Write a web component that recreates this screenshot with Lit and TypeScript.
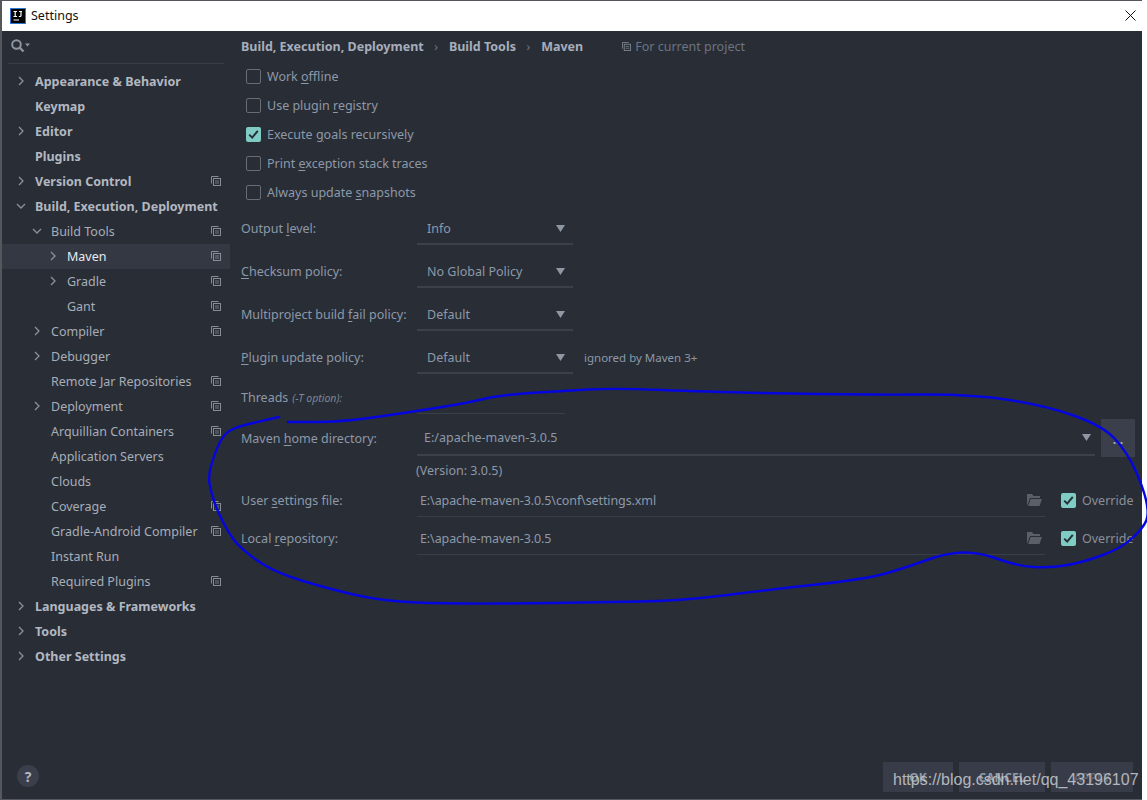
import { LitElement, html, css, svg } from "lit";
import { customElement } from "lit/decorators.js";

type Row = { t: string; d: number; b?: boolean; c?: "r" | "d"; copy?: boolean; sel?: boolean };

const ROWS: Row[] = [
  { t: "Appearance & Behavior", d: 0, b: true, c: "r" },
  { t: "Keymap", d: 0, b: true },
  { t: "Editor", d: 0, b: true, c: "r" },
  { t: "Plugins", d: 0, b: true },
  { t: "Version Control", d: 0, b: true, c: "r", copy: true },
  { t: "Build, Execution, Deployment", d: 0, b: true, c: "d" },
  { t: "Build Tools", d: 1, c: "d", copy: true },
  { t: "Maven", d: 2, c: "r", copy: true, sel: true },
  { t: "Gradle", d: 2, c: "r", copy: true },
  { t: "Gant", d: 2, copy: true },
  { t: "Compiler", d: 1, c: "r", copy: true },
  { t: "Debugger", d: 1, c: "r" },
  { t: "Remote Jar Repositories", d: 1, copy: true },
  { t: "Deployment", d: 1, c: "r", copy: true },
  { t: "Arquillian Containers", d: 1, copy: true },
  { t: "Application Servers", d: 1 },
  { t: "Clouds", d: 1 },
  { t: "Coverage", d: 1, copy: true },
  { t: "Gradle-Android Compiler", d: 1, copy: true },
  { t: "Instant Run", d: 1 },
  { t: "Required Plugins", d: 1, copy: true },
  { t: "Languages & Frameworks", d: 0, b: true, c: "r" },
  { t: "Tools", d: 0, b: true, c: "r" },
  { t: "Other Settings", d: 0, b: true, c: "r" },
];

const CURVE_A: number[][] = [[279,417],[262,421],[240,426],[226,432],[217,447],[208,475],[211,492],[217,510],[228,532],[240,548],[273,572],[333,590],[383,601],[450,604],[560,603],[597,602],[680,601],[766,590],[867,579],[908,567],[946,553],[979,552],[1017,566],[1051,568],[1084,562],[1122,548],[1144,527],[1149,513],[1143,487],[1127,452],[1103,426],[1047,406],[972,394],[867,395],[710,392],[616,388],[560,391],[500,395],[467,403],[417,411],[343,422],[288,422]];

function smooth(p: number[][]): string {
  let d = `M${p[0][0]} ${p[0][1]}`;
  for (let i = 1; i < p.length - 1; i++) {
    const mx = (p[i][0] + p[i + 1][0]) / 2;
    const my = (p[i][1] + p[i + 1][1]) / 2;
    d += ` Q${p[i][0]} ${p[i][1]} ${mx} ${my}`;
  }
  const l = p[p.length - 1];
  return d + ` L${l[0]} ${l[1]}`;
}

const copyIcon = (cls = "copy") => html`<svg class=${cls} viewBox="0 0 10 10" width="10" height="10" fill="none" stroke="currentColor" stroke-width="1">
  <path d="M7.5 .5H.5V7.5"/><rect x="2.5" y="2.5" width="7" height="7"/><path d="M4 5H8M4 7H8" stroke-width=".8"/></svg>`;

const chevron = (c?: "r" | "d") =>
  c === "r"
    ? html`<svg class="chev" viewBox="0 0 10 10" width="10" height="10" fill="none" stroke="currentColor" stroke-width="1.3"><path d="M3 1L7 5L3 9"/></svg>`
    : c === "d"
    ? html`<svg class="chev" viewBox="0 0 10 10" width="10" height="10" fill="none" stroke="currentColor" stroke-width="1.3"><path d="M1 3L5 7L9 3"/></svg>`
    : html`<span class="chev"></span>`;

const tick = html`<svg viewBox="0 0 15 15" width="15" height="15" fill="none" stroke="#263038" stroke-width="2"><path d="M3.2 7.6L6.2 10.6L11.8 3.8"/></svg>`;
const arrow = html`<svg class="arrow" viewBox="0 0 9 7" width="9" height="7"><path d="M0 0H9L4.5 7Z" fill="#8f97a4"/></svg>`;
const folder = html`<svg class="folder" viewBox="0 0 16 12" width="16" height="12"><path d="M1 0H6L7.5 2H14V4H4L1.5 11H1Z" fill="#5b6068"/><path d="M4.6 5H16L13.5 12H2.2Z" fill="#5b6068"/></svg>`;

@customElement("app-root")
export class AppRoot extends LitElement {
  static styles = css`
    :host { display: block; width: 1147px; height: 800px; background: #fff; position: relative; overflow: hidden;
      font-family: "Noto Sans", sans-serif; font-size: 12.5px; }
    .window { width: 1142px; height: 800px; box-sizing: border-box; border-left: 2px solid #55575c; border-top: 1px solid #55575c; border-bottom: 1px solid #55575c; display: flex; flex-direction: column; }
    .title { height: 30px; flex: none; background: #fff; display: flex; align-items: center; color: #111; font-size: 12.5px; padding-bottom: 1px; box-sizing: border-box; }
    .logo { width: 16px; height: 16px; margin-left: 8px; margin-right: 5px; background: #000; box-sizing: border-box; border: 1px solid #2b78d6; color: #fff; display: flex; flex-direction: column; align-items: center; }
    .logo svg { display: block; }
    .close { margin-left: auto; margin-right: 6px; }
    .body { flex: 1; display: flex; background: #292d36; min-height: 0; }
    .side { width: 228px; flex: none; display: flex; flex-direction: column; }
    .search { height: 33px; flex: none; margin: 0 6px; border-bottom: 1px solid #3a3e48; display: flex; align-items: center; padding-left: 3px; box-sizing: border-box; margin-bottom: 5px; color: #8f959f; padding-bottom: 3px; }
    .row { height: 25px; flex: none; display: flex; align-items: center; color: #a7aeb8; position: relative; padding-bottom: 1px; box-sizing: border-box; }
    .row.b { font-weight: 700; color: #b2b8c1; }
    .row.sel { background: #343842; color: #e4ebf3; }
    .d0 { padding-left: 14px; } .d1 { padding-left: 30px; } .d2 { padding-left: 46px; }
    .chev { width: 10px; height: 10px; margin-right: 9px; flex: none; color: #8b919b; }
    .copy { position: absolute; left: 209px; top: 7px; color: #878d97; }
    .help { margin: auto 0 12px 15px; width: 22px; height: 22px; border-radius: 50%; background: #3b3f4b; color: #b3b8c0; font-weight: 700; font-size: 14px; display: flex; align-items: center; justify-content: center; }

    .main { flex: 1; min-width: 0; display: flex; flex-direction: column; color: #8d99a8; }
    .crumb { height: 31px; flex: none; display: flex; align-items: center; padding-left: 11px; font-weight: 700; color: #a6aebb; box-sizing: border-box; }
    .sep { font-weight: 400; margin: 0 11px 0 10.5px; color: #717783; font-size: 12px; }
    .scope { margin-left: 39px; font-weight: 400; color: #6d7480; display: flex; align-items: center; gap: 4px; }
    .scope .copy { position: static; color: #7d838d; width: 9px; height: 9px; }
    .check { height: 29px; display: flex; align-items: center; padding-left: 16px; gap: 6px; flex: none; padding-bottom: 1px; box-sizing: border-box; }
    .box { width: 15px; height: 15px; box-sizing: border-box; border: 1px solid #686c74; border-radius: 2px; flex: none; }
    .box.on { background: #80cbc4; border: none; }
    .box svg { display: block; }
    u { text-underline-offset: 2px; text-decoration-thickness: 1px; }

    .form { display: flex; flex-direction: column; padding-left: 11px; flex: none; margin-top: 8px; }
    .f { display: flex; align-items: center; flex: none; }
    .lbl { width: 176px; flex: none; }
    .combo { width: 156px; height: 30px; flex: none; box-sizing: border-box; border-bottom: 2px solid #3c404a; display: flex; align-items: center; padding: 0 8px 1px 10px; justify-content: space-between; color: #8d99a8; }
    .f.c { height: 30px; margin-bottom: 13px; }
    .f.c .lbl, .threads .lbl { margin-bottom: 4px; }
    .note { margin-left: 11px; color: #8d99a8; font-size: 11.5px; margin-bottom: 4px; }
    .threads { height: 30px; align-items: center; margin-top: -3px; }
    .tline { width: 148px; height: 29px; box-sizing: border-box; border-bottom: 1px solid #3a3e48; }
    .opt { font-style: italic; font-size: 10.5px; margin-left: 4px; color: #7d8794; }
    .home { margin-top: 5px; height: 38px; position: relative; }
    .combo.wide { width: 678px; height: 37px; padding: 2px 4px 0 7px; margin-right: 6px; align-self: flex-start; }
    .dots { width: 34px; height: 38px; background: #3b3f4b; display: flex; align-items: center; justify-content: center; color: #a6aebb; font-weight: 700; padding-top: 2px; box-sizing: border-box; }
    .ver { height: 30px; padding-left: 175px; display: flex; align-items: center; flex: none; padding-bottom: 4px; box-sizing: border-box; }
    .file { height: 30px; align-items: center; }
    .file .lbl, .ov { margin-bottom: 3px; }
    .path { width: 628px; height: 30px; box-sizing: border-box; border-bottom: 1px solid #3a3e48; display: flex; align-items: center; justify-content: space-between; padding: 0 3px 3px 3px; color: #8d99a8; letter-spacing: -.1px; }
    .ov { display: flex; align-items: center; margin-left: 16px; gap: 6px; color: #8a8f98; }
    .file.second { margin-top: 8px; }

    .foot { margin-top: auto; display: flex; justify-content: flex-end; gap: 6px; padding: 0 9px 7px 0; flex: none; }
    .btn { height: 30px; background: #383c48; display: flex; align-items: center; justify-content: center; font-weight: 700; font-size: 12px; color: #8d99a8; }
    .ok { width: 70px; } .cancel { width: 86px; } .apply { width: 82px; color: #5d6470; }

    .curve { position: absolute; left: 0; top: 0; pointer-events: none; }
    .mark { position: absolute; left: 893px; top: 771px; font-family: "Liberation Sans", Arial, sans-serif; font-size: 16px; color: #c0c4ca; opacity: .9; white-space: nowrap; }
  `;

  private check(label: unknown, on = false) {
    return html`<div class="check"><span class="box ${on ? "on" : ""}">${on ? tick : ""}</span><span>${label}</span></div>`;
  }

  private combo(label: unknown, value: string, note?: string) {
    return html`<div class="f c"><span class="lbl">${label}</span><div class="combo"><span>${value}</span>${arrow}</div>${note ? html`<span class="note">${note}</span>` : ""}</div>`;
  }

  private file(label: unknown, value: string, cls = "") {
    return html`<div class="f file ${cls}"><span class="lbl">${label}</span><div class="path"><span>${value}</span>${folder}</div><div class="ov"><span class="box on">${tick}</span><span>Override</span></div></div>`;
  }

  render() {
    return html`
      <div class="window">
        <div class="title">
          <div class="logo"><svg viewBox="0 0 14 14" width="14" height="14"><path d="M2.5 2.5H6M4.2 2.5V7.5M2.5 7.5H6M8 2.5H11M10 2.5V6.5Q10 7.5 9 7.5H7.8M2.5 11H8" stroke="#fff" stroke-width="1.2" fill="none"/></svg></div>
          <span>Settings</span>
          <svg class="close" viewBox="0 0 11 11" width="11" height="11" stroke="#111" stroke-width="1"><path d="M.5 .5L10.5 10.5M10.5 .5L.5 10.5"/></svg>
        </div>
        <div class="body">
          <aside class="side">
            <div class="search">
              <svg viewBox="0 0 19 14" width="19" height="14" fill="none" stroke="currentColor" stroke-width="2"><circle cx="5.5" cy="5.5" r="4.3"/><path d="M8.5 8.5L12.5 12.5" stroke-width="2.4"/><path d="M14 4.5H19L16.5 7.5Z" fill="currentColor" stroke="none"/></svg>
            </div>
            ${ROWS.map(
              (r) => html`<div class="row d${r.d} ${r.b ? "b" : ""} ${r.sel ? "sel" : ""}">
                ${chevron(r.c)}<span>${r.t}</span>${r.copy ? copyIcon() : ""}
              </div>`
            )}
            <div class="help">?</div>
          </aside>
          <main class="main">
            <div class="crumb">
              <span>Build, Execution, Deployment</span><span class="sep">›</span><span>Build Tools</span><span class="sep">›</span><span>Maven</span>
              <span class="scope">${copyIcon()}For current project</span>
            </div>
            ${this.check(html`Work <u>o</u>ffline`)}
            ${this.check(html`Use plugin <u>r</u>egistry`)}
            ${this.check(html`Execute <u>g</u>oals recursively`, true)}
            ${this.check(html`Print <u>e</u>xception stack traces`)}
            ${this.check(html`Always update <u>s</u>napshots`)}
            <div class="form">
              ${this.combo(html`Output <u>l</u>evel:`, "Info")}
              ${this.combo(html`<u>C</u>hecksum policy:`, "No Global Policy")}
              ${this.combo(html`Multiproject build <u>f</u>ail policy:`, "Default")}
              ${this.combo(html`<u>P</u>lugin update policy:`, "Default", "ignored by Maven 3+")}
              <div class="f threads"><span class="lbl">Threads<span class="opt">(-T option):</span></span><div class="tline"></div></div>
              <div class="f home"><span class="lbl">Maven <u>h</u>ome directory:</span><div class="combo wide"><span>E:/apache-maven-3.0.5</span>${arrow}</div><div class="dots">...</div></div>
              <div class="ver">(Version: 3.0.5)</div>
              ${this.file(html`User <u>s</u>ettings file:`, "E:\\apache-maven-3.0.5\\conf\\settings.xml")}
              ${this.file(html`Local <u>r</u>epository:`, "E:\\apache-maven-3.0.5", "second")}
            </div>
            <div class="foot">
              <div class="btn ok">OK</div><div class="btn cancel">CANCEL</div><div class="btn apply">APPLY</div>
            </div>
          </main>
        </div>
      </div>
      <svg class="curve" width="1147" height="800" fill="none">${svg`<path d=${smooth(CURVE_A)} stroke="#0505e0" stroke-width="2.4" stroke-linecap="round"/>`}</svg>
      <div class="mark">https://blog.csdn.net/qq_43196107</div>
    `;
  }
}
